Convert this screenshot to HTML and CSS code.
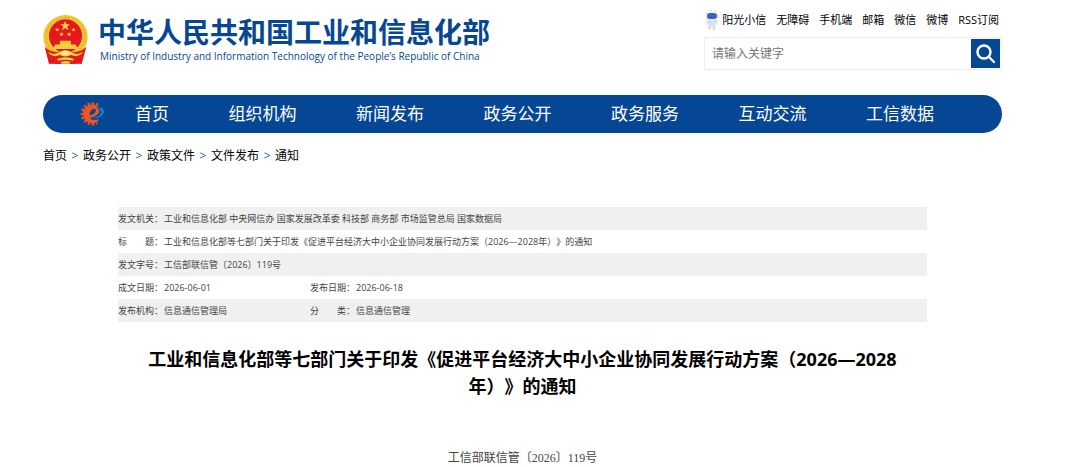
FILE: index.html
```html
<!DOCTYPE html>
<html lang="zh-CN">
<head>
<meta charset="utf-8">
<meta name="viewport" content="width=device-width, initial-scale=1">
<title>中华人民共和国工业和信息化部</title>
<link rel="stylesheet" href="styles.css">
</head>
<body>
<div class="page">
  <header class="header">
    <div class="brand">
      <svg class="emblem" viewBox="13 16 136 148" aria-hidden="true">
        <path d="M30 118 L132 118 L130 163 L110 158 L98 164 L63 164 L51 158 L31 163 Z" fill="#e01a1c"/>
        <ellipse cx="81" cy="82" rx="67" ry="66" fill="#f2c432"/>
        <ellipse cx="81" cy="80" rx="58" ry="57" fill="none" stroke="#d9a01c" stroke-width="2" stroke-dasharray="7 5"/>
        <ellipse cx="81" cy="79" rx="50" ry="50" fill="#e3191d"/>
        <path d="M80 34l4 10h11l-9 7 4 11-10-7-10 7 4-11-9-7h11z" fill="#ffd84a"/>
        <path d="M56 54l2 4h5l-4 3 1 5-4-3-4 3 1-5-4-3h5zM105 54l2 4h5l-4 3 1 5-4-3-4 3 1-5-4-3h5zM69 68l2 4h5l-4 3 1 5-4-3-4 3 1-5-4-3h5zM92 68l2 4h5l-4 3 1 5-4-3-4 3 1-5-4-3h5z" fill="#ffd84a"/>
        <path d="M64 94H97V105H112L118 119H43L50 105H64Z" fill="#f6cf3e"/>
        <path d="M18 112Q34 128 56 128L80 122L105 128Q128 128 144 112L130 163L98 164H63L31 163Z" fill="#e3191d"/>
        <path d="M29 127Q44 140 64 127Q80 119 97 127Q117 140 133 127L130 134Q114 145 98 137Q80 146 64 137Q46 145 32 134Z" fill="#f6cf3e"/>
        <ellipse cx="81" cy="130" rx="13" ry="7" fill="#fff0a0"/>
        <path d="M55 149Q81 139 107 149L103 154Q81 148 59 154ZM66 158Q81 152 96 158L93 163H69Z" fill="#f6cf3e"/>
      </svg>
      <div class="brand-text">
        <h1 class="brand-cn">中华人民共和国工业和信息化部</h1>
        <p class="brand-en">Ministry of Industry and Information Technology of the People’s Republic of China</p>
      </div>
    </div>
    <div class="tools">
      <div class="links">
        <a class="mascot-link" href="#">
          <svg class="mascot" viewBox="0 0 14 20" aria-hidden="true">
            <path d="M2 9H12L13 15L11 14L10 19H8L7 16L6 19H4L3 14L1 15Z" fill="#d3e3fa"/>
            <circle cx="7" cy="6" r="5" fill="#e6effc"/>
            <circle cx="7" cy="6" r="6" fill="none" stroke="#f5cb4c" stroke-width="1" stroke-dasharray="2 3"/>
            <rect x="2" y="3" width="10" height="6" rx="3" fill="#3c5fd0"/>
            <circle cx="4" cy="18" r="1" fill="#f5cf63"/><circle cx="9" cy="19" r="1" fill="#f5cf63"/>
          </svg>阳光小信</a>
        <a href="#">无障碍</a>
        <a href="#">手机端</a>
        <a href="#">邮箱</a>
        <a href="#">微信</a>
        <a href="#">微博</a>
        <a href="#">RSS订阅</a>
      </div>
      <form class="search">
        <input class="search-input" type="text" placeholder="请输入关键字" aria-label="请输入关键字">
        <button class="search-button" type="button" aria-label="搜索">
          <svg class="search-icon" viewBox="0 0 20 20" aria-hidden="true"><circle cx="8" cy="8" r="6.5"/><path d="M13 13L18 18"/></svg>
        </button>
      </form>
    </div>
  </header>

  <nav class="nav">
    <svg class="nav-logo" viewBox="0 0 78 78" aria-hidden="true">
      <path d="M56 13A30 30 0 1 0 54 65" fill="none" stroke="#e8501f" stroke-width="10" stroke-dasharray="7 5"/>
      <path d="M61 20A28 28 0 1 0 57 61L59 54Q40 62 33 50Q60 46 60 29Q59 20 50 18Q57 17 61 20ZM32 43Q32 24 46 23Q52 24 50 31Q46 40 32 43Z" fill="#ec5524" fill-rule="evenodd"/>
      <path d="M34 49Q58 48 63 29Q63 23 60 19Q78 22 74 36Q66 52 37 55Q62 48 69 33Q68 29 66 27Q60 47 34 49Z" fill="#1786d6"/>
    </svg>
    <div class="nav-items">
      <a href="#">首页</a>
      <a href="#">组织机构</a>
      <a href="#">新闻发布</a>
      <a href="#">政务公开</a>
      <a href="#">政务服务</a>
      <a href="#">互动交流</a>
      <a href="#">工信数据</a>
    </div>
  </nav>

  <div class="crumbs">
    <a href="#">首页</a><span class="sep">&gt;</span><a href="#">政务公开</a><span class="sep">&gt;</span><a href="#">政策文件</a><span class="sep">&gt;</span><a href="#">文件发布</a><span class="sep">&gt;</span><a href="#">通知</a>
  </div>

  <main class="article">
    <table class="meta">
      <colgroup><col class="col-label"><col class="col-value"><col class="col-label"><col></colgroup>
      <tbody>
        <tr><th scope="row">发文机关：</th><td colspan="3">工业和信息化部 中央网信办 国家发展改革委 科技部 商务部 市场监管总局 国家数据局</td></tr>
        <tr><th scope="row"><span class="spread"><span>标</span><span>题：</span></span></th><td colspan="3">工业和信息化部等七部门关于印发《促进平台经济大中小企业协同发展行动方案（2026—2028年）》的通知</td></tr>
        <tr><th scope="row">发文字号：</th><td colspan="3">工信部联信管〔2026〕119号</td></tr>
        <tr><th scope="row">成文日期：</th><td>2026-06-01</td><th scope="row">发布日期：</th><td>2026-06-18</td></tr>
        <tr><th scope="row">发布机构：</th><td>信息通信管理局</td><th scope="row"><span class="spread"><span>分</span><span>类：</span></span></th><td>信息通信管理</td></tr>
      </tbody>
    </table>
    <h2 class="title">工业和信息化部等七部门关于印发《促进平台经济大中小企业协同发展行动方案（2026—2028年）》的通知</h2>
    <p class="doc-number">工信部联信管〔2026〕119号</p>
  </main>
</div>
</body>
</html>
```

FILE: styles.css
```css
* {
  box-sizing: border-box;
}

body {
  margin: 0;
  background: #fff;
  color: #000;
  font-family: "Open Sans", "Noto Sans CJK SC", sans-serif;
  font-size: 12px;
  text-spacing-trim: space-all;
}

h1,
h2,
p {
  margin: 0;
}

a {
  color: inherit;
  text-decoration: none;
}

.page {
  padding: 10px 78px 0 43px;
}

.header {
  display: flex;
  justify-content: space-between;
  height: 85px;
}

.brand {
  display: flex;
  gap: 10px;
  padding-top: 5px;
}

.emblem {
  width: 45px;
  height: 49px;
}

.brand-text {
  color: #064795;
  white-space: nowrap;
}

.brand-cn {
  font-size: 28px;
  line-height: 34px;
}

.brand-en {
  padding-left: 2px;
  font-size: 10px;
  font-weight: 500;
  line-height: 14px;
}

.tools {
  width: 298px;
}

.links {
  display: flex;
  justify-content: flex-end;
  gap: 10px;
  padding-right: 3px;
  font-size: 11px;
  line-height: 20px;
  white-space: nowrap;
}

.mascot-link {
  display: flex;
  gap: 3px;
}

.mascot {
  width: 14px;
  height: 20px;
}

.search {
  display: flex;
  height: 33px;
  margin-top: 7px;
  padding: 1px;
  border: 1px solid #eee;
}

.search-input {
  flex: 1;
  min-width: 0;
  padding: 0 6px;
  border: 0;
  background: none;
  font: inherit;
}

.search-input::placeholder {
  color: #757575;
}

.search-button {
  display: flex;
  align-items: center;
  justify-content: center;
  width: 29px;
  padding: 0;
  border: 0;
  background: #064795;
}

.search-icon {
  width: 20px;
  height: 20px;
  fill: none;
  stroke: #fff;
  stroke-width: 2.4;
  stroke-linecap: round;
}

.nav {
  display: flex;
  align-items: center;
  gap: 30px;
  height: 38px;
  padding: 0 68px 0 36px;
  border-radius: 19px;
  background: #064795;
}

.nav-logo {
  flex: none;
  width: 26px;
  height: 26px;
}

.nav-items {
  display: flex;
  flex: 1;
  justify-content: space-between;
  color: #fff;
  font-size: 17px;
  line-height: 38px;
  white-space: nowrap;
}

.crumbs {
  display: flex;
  padding-top: 13px;
  line-height: 20px;
}

.sep {
  width: 16px;
  color: #2a62a8;
  text-align: center;
}

.article {
  padding: 41px 75px 0;
}

.meta {
  width: 100%;
  border-collapse: collapse;
  table-layout: fixed;
  color: #444;
  font-size: 9px;
}

.meta tr:nth-child(odd) {
  background: #f0f0f0;
}

.meta th,
.meta td {
  height: 23px;
  padding: 0;
  font-weight: 400;
  line-height: 16px;
  text-align: left;
  white-space: nowrap;
}

.col-label {
  width: 46px;
}

.col-value {
  width: 146px;
}

.spread {
  display: flex;
  justify-content: space-between;
  width: 45px;
}

.title {
  padding: 24px 24px 0;
  font-size: 18px;
  line-height: 27px;
  text-align: center;
}

.doc-number {
  padding-top: 48px;
  color: #444;
  font-family: "Liberation Serif", "Noto Sans CJK SC", serif;
  line-height: 20px;
  text-align: center;
}
```
